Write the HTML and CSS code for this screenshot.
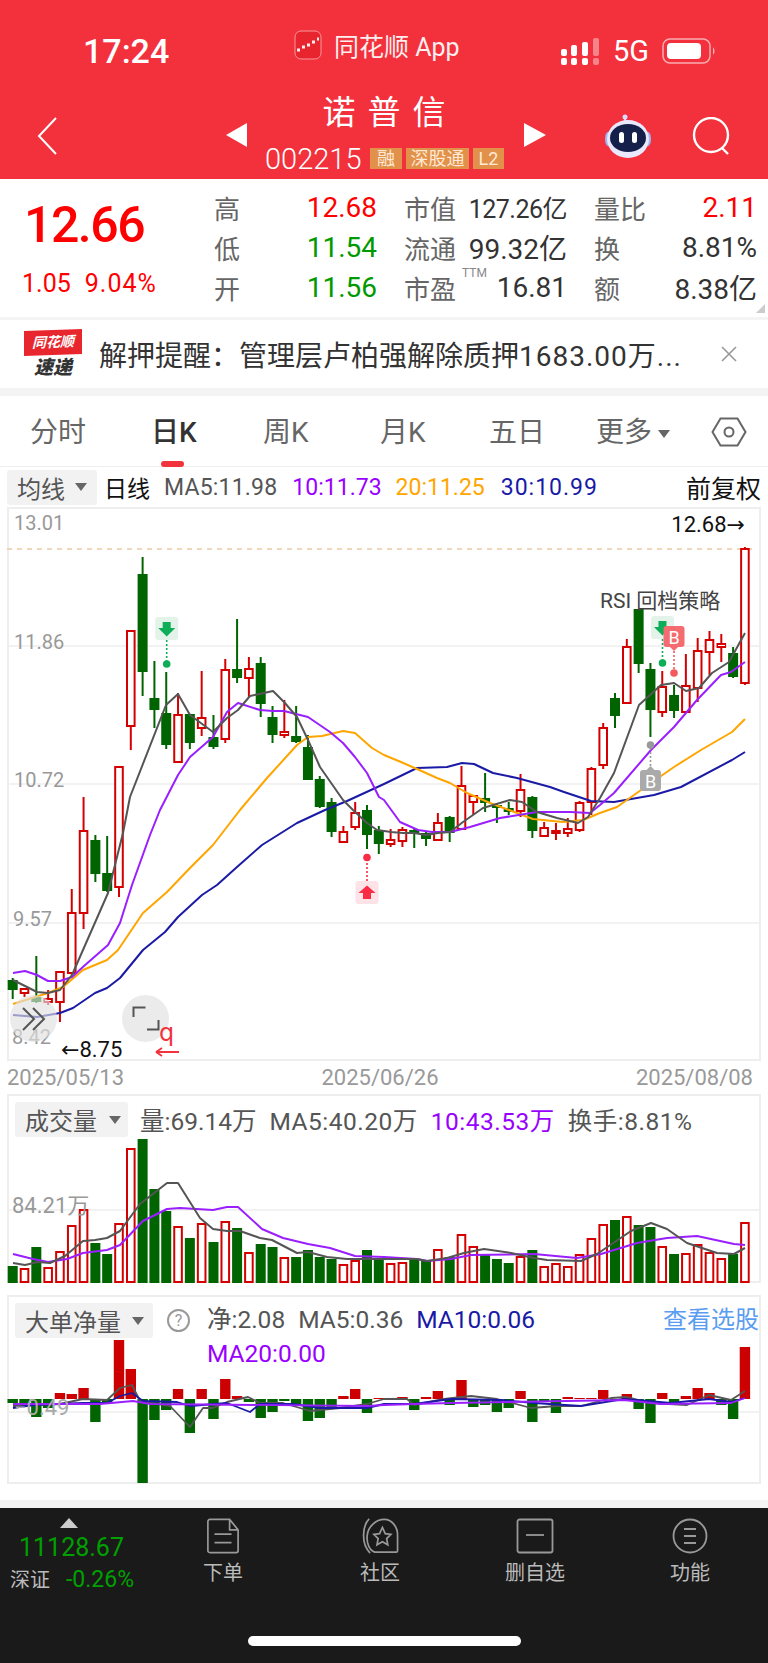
FILE: index.html
```html
<!DOCTYPE html>
<html lang="zh-CN">
<head>
    <meta charset="UTF-8">
    <meta name="viewport" content="width=device-width, initial-scale=1.0">
    <title>诺普信 002215</title>
    <link rel="stylesheet" href="styles.css">
</head>
<body>
    <div id="app">
        <header class="top">
            <div class="status">
                <div class="time">17:24</div>
                <div class="carrier">
                    <svg class="app-logo" viewBox="0 0 28 30">
                        <rect x="1" y="1" width="26" height="28" rx="6" fill="#e8252d" stroke="#f9a0a3"/>
                        <path d="M3 20h3M8 17h3M13 15h3M18 12h3M23 9h2" stroke="#fff" stroke-width="3"/>
                    </svg>
                    <span>同花顺 App</span>
                </div>
                <div class="status-right">
                    <svg class="signal" viewBox="0 0 38 27">
                        <g fill="#fff">
                            <rect x="0" y="11" width="6" height="7" rx="2"/><rect x="0" y="20" width="6" height="7" rx="2"/>
                            <rect x="10" y="7" width="6" height="11" rx="2"/><rect x="10" y="20" width="6" height="7" rx="2"/>
                            <rect x="21" y="4" width="6" height="14" rx="2"/><rect x="21" y="20" width="6" height="7" rx="2"/>
                        </g>
                        <g fill="#fff" opacity=".4">
                            <rect x="32" y="0" width="6" height="18" rx="2"/><rect x="32" y="20" width="6" height="7" rx="2"/>
                        </g>
                    </svg>
                    <span class="net">5G</span>
                    <svg class="battery" viewBox="0 0 54 26">
                        <rect x="1" y="1" width="47" height="24" rx="7" fill="none" stroke="#fff" stroke-opacity=".6" stroke-width="1.5"/>
                        <rect x="5" y="5" width="34" height="16" rx="4" fill="#fff"/>
                        <path d="M51 9.500c2 1 2 6 0 7z" fill="#fff" opacity=".6"/>
                    </svg>
                </div>
            </div>
            <div class="nav">
                <svg class="back" viewBox="0 0 20 38"><path d="M19 1 2 19l17 18" fill="none" stroke="#fff" stroke-width="2"/></svg>
                <div class="arrow-left"></div>
                <div class="title">
                    <div class="name">诺普信</div>
                    <div class="code-row">
                        <span class="code">002215</span>
                        <span class="tag tag-rong">融</span>
                        <span class="tag tag-sgt">深股通</span>
                        <span class="tag tag-l2">L2</span>
                    </div>
                </div>
                <div class="arrow-right"></div>
                <svg class="robot" viewBox="0 0 48 44">
                    <path d="M22 8c-2-3-1-6 1-6" fill="none" stroke="#dcd8ff" stroke-width="2"/>
                    <circle cx="21" cy="3" r="2.500" fill="#dcd8ff"/>
                    <ellipse cx="4" cy="25" rx="3" ry="7" fill="#9fb4f5"/>
                    <ellipse cx="44" cy="25" rx="3" ry="7" fill="#9fb4f5"/>
                    <ellipse cx="24" cy="25" rx="21" ry="19" fill="#e9e8fd"/>
                    <ellipse cx="24" cy="24" rx="18" ry="14" fill="#14204a"/>
                    <rect x="15" y="18" width="5" height="11" rx="2.500" fill="#fff"/>
                    <rect x="28" y="18" width="5" height="11" rx="2.500" fill="#fff"/>
                </svg>
                <svg class="search" viewBox="0 0 40 38">
                    <circle cx="19" cy="18" r="17" fill="none" stroke="#fff" stroke-width="2.400"/>
                    <path d="m30 31 6 6" stroke="#fff" stroke-width="2.400"/>
                </svg>
            </div>
        </header>

        <section class="quote">
            <div class="price-block">
                <div class="price">12.66</div>
                <div class="change"><span>1.05</span><span class="pct">9.04%</span></div>
            </div>
            <div class="stats">
                <div class="stat"><span class="lbl">高</span><span class="val up">12.68</span></div>
                <div class="stat"><span class="lbl">市值</span><span class="val small">127.26亿</span></div>
                <div class="stat"><span class="lbl">量比</span><span class="val up">2.11</span></div>
                <div class="stat"><span class="lbl">低</span><span class="val down">11.54</span></div>
                <div class="stat"><span class="lbl">流通</span><span class="val">99.32亿</span></div>
                <div class="stat"><span class="lbl">换</span><span class="val">8.81%</span></div>
                <div class="stat"><span class="lbl">开</span><span class="val down">11.56</span></div>
                <div class="stat"><span class="lbl">市盈<sup class="ttm">TTM</sup></span><span class="val">16.81</span></div>
                <div class="stat"><span class="lbl">额</span><span class="val">8.38亿</span></div>
            </div>
            <div class="corner"></div>
        </section>

        <section class="news">
            <div class="news-logo">
                <div class="news-badge">同花顺</div>
                <div class="news-sub">速递</div>
            </div>
            <div class="news-text">解押提醒：管理层卢柏强解除质押<span class="news-tail">1683.00万...</span></div>
            <svg class="news-close" viewBox="0 0 16 16"><path d="m1 1 14 14M15 1 1 15" stroke="#999" stroke-width="1.600"/></svg>
        </section>

        <nav class="tabs">
            <span class="tab tab-fs">分时</span>
            <span class="tab tab-day active">日K</span>
            <span class="tab tab-week">周K</span>
            <span class="tab tab-month">月K</span>
            <span class="tab tab-five">五日</span>
            <span class="tab tab-more">更多<i class="caret"></i></span>
            <svg class="hex" viewBox="0 0 36 30">
                <path d="M9.500 1.500h17L34.500 15l-8 13.500h-17L1.500 15z" fill="none" stroke="#666" stroke-width="2"/>
                <circle cx="18" cy="15" r="4.500" fill="none" stroke="#666" stroke-width="2"/>
            </svg>
        </nav>

        <div class="legend legend-main">
            <div class="picker"><span>均线</span><i class="caret"></i></div>
            <span class="black">日线</span>
            <span class="ma5">MA5:11.98</span>
            <span class="ma10">10:11.73</span>
            <span class="ma20">20:11.25</span>
            <span class="ma30">30:10.99</span>
            <span class="adjust">前复权</span>
        </div>

        <div class="chart chart-main" id="chart-main">
            <span class="axis" id="ax-1301">13.01</span>
            <span class="axis" id="ax-1186">11.86</span>
            <span class="axis" id="ax-1072">10.72</span>
            <span class="axis" id="ax-957">9.57</span>
            <span class="axis" id="ax-842">8.42</span>
            <span class="peak" id="mark-high">12.68→</span>
            <span class="peak" id="mark-low">←8.75</span>
            <span class="strategy">RSI 回档策略</span>
            <div class="float-btn btn-expand">
                <svg viewBox="0 0 30 30"><path d="M4 4 15 15 4 26M14 4 25 15 14 26" fill="none" stroke="#555" stroke-width="2"/></svg>
            </div>
            <div class="float-btn btn-corners">
                <svg viewBox="0 0 30 30"><path d="M2.500 13V3.500h12M27.500 16v9.500H16" fill="none" stroke="#555" stroke-width="2"/></svg>
            </div>
            <span class="stray-q">q</span>
            <svg class="stray-arrow" viewBox="0 0 24 12"><path d="M1 6h23M1 6l6-4M1 6l6 4" fill="none" stroke="#f2323c" stroke-width="1.800"/></svg>
        </div>

        <div class="dates">
            <span>2025/05/13</span>
            <span>2025/06/26</span>
            <span>2025/08/08</span>
        </div>

        <div class="chart chart-vol" id="chart-vol">
            <div class="legend legend-sub">
                <div class="picker picker-vol"><span>成交量</span><i class="caret"></i></div>
                <span class="gray">量:69.14万</span>
                <span class="gray wide">MA5:40.20万</span>
                <span class="ma10 wide">10:43.53万</span>
                <span class="gray wide">换手:8.81%</span>
            </div>
            <span class="axis" id="ax-vol">84.21万</span>
        </div>

        <div class="chart chart-net" id="chart-net">
            <div class="legend legend-net">
                <div class="picker picker-net"><span>大单净量</span><i class="caret"></i></div>
                <span class="help">?</span>
                <div class="net-values">
                    <span class="gray">净:2.08</span>
                    <span class="gray">MA5:0.36</span>
                    <span class="ma30">MA10:0.06</span>
                    <span class="ma10 net-wrap">MA20:0.00</span>
                </div>
                <span class="pick-link">查看选股</span>
            </div>
            <span class="axis" id="ax-net">−0.49</span>
        </div>

        <div class="white-gap"></div>
        <footer class="bottom">
            <div class="index">
                <div class="index-up"></div>
                <div class="index-val">11128.67</div>
                <div class="index-row"><span class="index-name">深证</span><span class="index-pct">-0.26%</span></div>
            </div>
            <div class="action action-order">
                <svg viewBox="0 0 36 38"><path d="M2 3.500a2 2 0 0 1 2-2h21l9 11v22a2 2 0 0 1-2 2H4a2 2 0 0 1-2-2zM25 1.500v11h9M9 17h18M9 26h18" fill="none" stroke="#999" stroke-width="1.800"/></svg>
                <span>下单</span>
            </div>
            <div class="action action-social">
                <svg viewBox="0 0 40 38"><path d="M8 1C1 8-1 27 9 37" fill="none" stroke="#999" stroke-width="1.800"/><path d="M24 1.500c8 0 14 8 14 16v17a1.500 1.500 0 0 1-1.500 1.500H14C8 34 5 26 6 18 7 9 15 1.500 24 1.500z" fill="none" stroke="#999" stroke-width="1.800"/><path d="m22 10 3 6.500 6 .8-4.500 4.500 1.200 6.500-5.700-3.300-5.700 3.300 1.200-6.500-4.500-4.500 6-.8z" fill="none" stroke="#999" stroke-width="1.800"/></svg>
                <span>社区</span>
            </div>
            <div class="action action-del">
                <svg viewBox="0 0 38 36"><rect x="1.500" y="1.500" width="35" height="33" rx="2" fill="none" stroke="#999" stroke-width="1.800"/><path d="M10 17h18" stroke="#999" stroke-width="1.800"/></svg>
                <span>删自选</span>
            </div>
            <div class="action action-more">
                <svg viewBox="0 0 36 36"><circle cx="18" cy="18" r="16.500" fill="none" stroke="#999" stroke-width="1.800"/><path d="M12 11h12M12 18h12M12 25h12" stroke="#999" stroke-width="2"/></svg>
                <span>功能</span>
            </div>
            <div class="home-bar"></div>
        </footer>
    </div>

    <script src="chart.js"></script>
</body>
</html>
```

FILE: styles.css
```css
* {
    box-sizing: border-box;
}

body {
    font-family: Roboto, "Noto Sans CJK SC", sans-serif;
    margin: 0;
    padding: 0;
    background-color: #fff;
}

#app {
    width: 768px;
    height: 1663px;
    overflow: hidden;
    position: relative;
}

.caret {
    display: inline-block;
    width: 0;
    height: 0;
    border-left: 6px solid transparent;
    border-right: 6px solid transparent;
    border-top: 8px solid #666;
}

/* red header */
.top {
    height: 179px;
    background-color: #f2313c;
    color: #fff;
}

.status {
    height: 92px;
    padding-top: 10px;
    display: flex;
    align-items: center;
    position: relative;
}

.time {
    margin-left: 83px;
    font-size: 34px;
    font-weight: 500;
}

.carrier {
    position: absolute;
    left: 294px;
    top: 27px;
    display: flex;
    align-items: center;
    gap: 12px;
    font-size: 25px;
    color: #fff;
    opacity: .92;
}

.app-logo {
    width: 28px;
    height: 30px;
}

.status-right {
    margin-left: auto;
    margin-right: 52px;
    display: flex;
    align-items: center;
}

.signal {
    width: 38px;
    height: 27px;
    margin-right: 14px;
}

.net {
    font-size: 29px;
    width: 49px;
}

.battery {
    width: 54px;
    height: 26px;
}

.nav {
    height: 87px;
    display: flex;
    align-items: center;
    position: relative;
}

.back {
    width: 20px;
    height: 38px;
    margin-left: 37px;
}

.arrow-left, .arrow-right {
    width: 0;
    height: 0;
    margin-bottom: 2px;
    border-top: 12px solid transparent;
    border-bottom: 12px solid transparent;
}

.arrow-left {
    margin-left: 169px;
    border-right: 21px solid #fff;
}

.arrow-right {
    border-left: 22px solid #fff;
}

.title {
    width: 277px;
    text-align: center;
    align-self: flex-start;
}

.name {
    font-size: 33px;
    letter-spacing: 12px;
    padding-left: 9px;
    line-height: 40px;
    margin-top: 1px;
    font-weight: 400;
}

.code-row {
    display: flex;
    align-items: center;
    height: 21px;
    margin: 15px 0 0 18px;
}

.code {
    font-size: 29px;
    font-weight: 300;
    width: 105px;
    text-align: left;
}

.tag {
    height: 21px;
    line-height: 21px;
    background-color: #e2914a;
    font-size: 18px;
    text-align: center;
    color: #ffe9d6;
}

.tag-rong {
    width: 32px;
    margin-right: 4px;
}

.tag-sgt {
    width: 63px;
    margin-right: 4px;
}

.tag-l2 {
    width: 31px;
}

.robot {
    width: 48px;
    height: 44px;
    margin-left: 58px;
}

.search {
    width: 40px;
    height: 38px;
    margin-left: 40px;
}

/* price panel */
.quote {
    height: 141px;
    display: flex;
    position: relative;
    border-bottom: 3px solid #f4f4f4;
}

.price-block {
    width: 214px;
    padding-left: 24px;
    color: #f00;
}

.price {
    font-size: 50px;
    font-weight: 500;
    line-height: 58px;
    margin-top: 17px;
    letter-spacing: -1.500px;
}

.change {
    display: flex;
    gap: 14px;
    font-size: 25px;
    line-height: 28px;
    margin-top: 16px;
    margin-left: -2px;
}

.pct {
    letter-spacing: 1px;
}

.stats {
    width: 543px;
    display: grid;
    grid-template-columns: 163px 163px 163px;
    column-gap: 27px;
    grid-auto-rows: 40px;
    padding-top: 8px;
}

.stat {
    display: flex;
    justify-content: space-between;
    align-items: center;
}

.lbl {
    font-size: 26px;
    color: #666;
    position: relative;
}

.ttm {
    position: absolute;
    left: 58px;
    top: -3px;
    font-size: 12px;
    line-height: 14px;
    color: #888;
}

.val {
    font-size: 28px;
    color: #333;
}

.val.small {
    font-size: 25px;
    letter-spacing: -.5px;
}

.up {
    color: #f00;
}

.down {
    color: #090;
}

.corner {
    position: absolute;
    right: 3px;
    bottom: 4px;
    width: 0;
    height: 0;
    border-left: 9px solid transparent;
    border-bottom: 9px solid #ccc;
}

/* news strip */
.news {
    height: 76px;
    display: flex;
    align-items: center;
    border-bottom: 8px solid #f4f4f4;
    padding-left: 24px;
}

.news-logo {
    width: 58px;
}

.news-badge {
    background-color: #e8262e;
    color: #fff;
    font-size: 14px;
    font-weight: 700;
    font-style: italic;
    line-height: 25px;
    height: 25px;
    text-align: center;
    transform: skewY(-2deg);
}

.news-sub {
    font-size: 19px;
    font-weight: 900;
    font-style: italic;
    color: #333;
    line-height: 22px;
    text-align: center;
    margin-top: 2px;
}

.news-text {
    font-size: 28px;
    color: #333;
    margin-left: 17px;
    white-space: nowrap;
    width: 622px;
}

.news-tail {
    letter-spacing: 1px;
}

.news-close {
    width: 16px;
    height: 16px;
}

/* period tabs */
.tabs {
    height: 71px;
    position: relative;
    border-bottom: 1px solid #eee;
}

.tab {
    position: absolute;
    top: 18px;
    font-size: 28px;
    line-height: 38px;
    color: #666;
}

.tab-fs { left: 30px; }
.tab-week { left: 263px; }
.tab-month { left: 380px; }
.tab-five { left: 489px; }
.tab-more { left: 596px; }

.tab-day {
    left: 151px;
}

.tab.active {
    color: #333;
    font-weight: 500;
}

.tab.active::after {
    content: "";
    position: absolute;
    left: 10px;
    top: 47px;
    width: 23px;
    height: 6px;
    border-radius: 3px;
    background-color: #f2323c;
}

.tab-more .caret {
    margin-left: 6px;
    vertical-align: 4px;
}

.hex {
    position: absolute;
    left: 711px;
    top: 21px;
    width: 36px;
    height: 30px;
}

/* indicator legends */
.legend {
    display: flex;
    align-items: center;
    font-size: 24.500px;
    white-space: nowrap;
}

.legend-main {
    height: 40px;
    padding-left: 7px;
    font-size: 23px;
}

.picker {
    display: flex;
    align-items: center;
    gap: 10px;
    height: 35px;
    padding-left: 10px;
    background-color: #f2f2f2;
    border-radius: 3px;
    color: #555;
    font-size: 24px;
    width: 90px;
    flex: none;
}

.black {
    color: #111;
    margin-left: 7px;
    margin-right: 14px;
}

.gray, .ma5 {
    color: #555;
}

.ma10 {
    color: #90f;
}

.ma20 {
    color: #ffa500;
}

.ma30 {
    color: #1a1aa6;
}

.legend-main .ma5 {
    letter-spacing: .2px;
}

.legend-main .ma10 {
    margin-left: 15px;
}

.legend-main .ma20 {
    margin-left: 14px;
}

.legend-main .ma30 {
    margin-left: 16px;
    letter-spacing: 1px;
}

.adjust {
    margin-left: auto;
    margin-right: 7px;
    color: #111;
    font-size: 25px;
}

/* chart boxes */
.chart {
    position: relative;
    margin: 0 7px;
    width: 754px;
    border: 2px solid #eee;
}

.chart svg.plot {
    position: absolute;
    left: -2px;
    top: -2px;
    width: 754px;
}

.chart-main {
    height: 554px;
}

.chart-vol {
    height: 189px;
    margin-bottom: 12px;
}

.chart-net {
    height: 189px;
}

.axis {
    position: absolute;
    font-size: 20px;
    line-height: 24px;
    color: #999;
    white-space: nowrap;
    z-index: 1;
}

#ax-1301 { left: 5px; top: 2px; }
#ax-1186 { left: 5px; top: 121px; }
#ax-1072 { left: 5px; top: 259px; }
#ax-957 { left: 4px; top: 398px; }
#ax-842 { left: 3px; top: 516px; }
#ax-vol { left: 3px; top: 98px; font-size: 22px; }
#ax-net { left: 5px; top: 99px; font-size: 22px; color: #aaa; }

.peak {
    position: absolute;
    font-size: 22px;
    line-height: 24px;
    color: #111;
    font-family: Roboto, "DejaVu Sans", sans-serif;
    white-space: nowrap;
}

#mark-high { right: 14px; top: 4px; }
#mark-low { left: 52px; top: 529px; }

.strategy {
    position: absolute;
    left: 591px;
    top: 79px;
    font-size: 21px;
    line-height: 26px;
    color: #444;
    white-space: nowrap;
}

.float-btn {
    position: absolute;
    width: 47px;
    height: 47px;
    border-radius: 50%;
    background-color: rgba(225, 225, 225, .65);
    display: flex;
    align-items: center;
    justify-content: center;
    z-index: 2;
}

.float-btn svg {
    width: 30px;
    height: 30px;
}

.btn-expand {
    left: 1px;
    top: 486px;
}

.btn-corners {
    left: 113px;
    top: 486px;
}

.stray-q {
    position: absolute;
    left: 150px;
    top: 514px;
    color: #f2323c;
    font-family: "DejaVu Sans", sans-serif;
    font-size: 24px;
    line-height: 20px;
    z-index: 3;
}

.stray-arrow {
    position: absolute;
    left: 146px;
    top: 537px;
    width: 24px;
    height: 12px;
    z-index: 3;
}

.dates {
    height: 33px;
    margin: 0 15px 0 7px;
    display: flex;
    justify-content: space-between;
    align-items: center;
    font-size: 22px;
    color: #999;
}

.legend-sub {
    position: absolute;
    left: 6px;
    top: 6px;
    gap: 13px;
    z-index: 1;
}

.wide {
    letter-spacing: .5px;
}

.picker-vol {
    width: 113px;
    margin-right: -1px;
}

.picker-net {
    width: 138px;
    gap: 9px;
}

.picker-net .caret, .picker-vol .caret {
    margin-left: 2px;
}

.legend-net {
    position: absolute;
    left: 6px;
    top: 6px;
    right: 0;
    align-items: flex-start;
    z-index: 1;
}

.help {
    width: 23px;
    height: 23px;
    border: 2px solid #999;
    border-radius: 50%;
    color: #999;
    font-size: 16px;
    line-height: 19px;
    text-align: center;
    margin: 6px 0 0 14px;
}

.net-values {
    display: flex;
    flex-wrap: wrap;
    gap: 0 13px;
    width: 340px;
    margin-left: 17px;
    line-height: 34px;
}

.net-wrap {
    width: 100%;
}

.pick-link {
    margin-left: 117px;
    font-size: 24px;
    line-height: 35px;
    color: #5a9df0;
}

/* bottom bar */
.white-gap {
    height: 16px;
}

.bottom {
    height: 163px;
    background-color: #1a1a1a;
    border-top: 8px solid #f4f4f4;
    position: relative;
    display: flex;
    color: #bbb;
}

.index {
    width: 170px;
    position: relative;
}

.index-up {
    position: absolute;
    left: 60px;
    top: 10px;
    width: 0;
    height: 0;
    border-left: 9px solid transparent;
    border-right: 9px solid transparent;
    border-bottom: 10px solid #ccc;
}

.index-val {
    position: absolute;
    left: 19px;
    top: 25px;
    font-size: 25px;
    line-height: 30px;
    color: #00a000;
}

.index-row {
    position: absolute;
    left: 10px;
    top: 59px;
    display: flex;
    align-items: center;
    gap: 16px;
    line-height: 26px;
}

.index-name {
    font-size: 20px;
}

.index-pct {
    font-size: 23px;
    color: #00a000;
}

.action {
    position: absolute;
    top: 10px;
    display: flex;
    flex-direction: column;
    align-items: center;
    font-size: 20px;
    line-height: 26px;
    gap: 6px;
}

.action svg {
    height: 36px;
}

.action-order { left: 203px; width: 40px; }
.action-social { left: 360px; width: 40px; }
.action-del { left: 505px; width: 60px; }
.action-more { left: 670px; width: 40px; }

.action-order svg { width: 34px; }
.action-social svg { width: 39px; }
.action-del svg { width: 38px; }
.action-more svg { width: 36px; }

.home-bar {
    position: absolute;
    left: 248px;
    top: 128px;
    width: 273px;
    height: 10px;
    border-radius: 5px;
    background-color: #fff;
}
```

FILE: chart.js
```js
// all y values below are page coordinates, each svg viewBox starts at its box top
const RED = '#d40000';
const GREEN = '#006400';
const COLORS = { ma5: '#555', ma10: '#9a1fff', ma20: '#ffa500', ma30: '#1a1aa6' };
const firstX = 12.7;
const stepX = 11.81;

// [up?, bodyTop, bodyBottom, wickTop, wickBottom]
const candles = [
    [0,980,990,978,999],[1,989,993,988,997],[0,997,1002,956,1003],[1,999,1002,990,1005],
    [1,972,1002,972,1022],[1,913,973,889,975],[1,831,913,797,929],[0,840,874,835,882],
    [0,873,891,836,892],[1,767,887,767,897],[1,631,726,631,750],[0,574,672,557,696],
    [0,698,710,661,728],[0,713,745,672,749],[1,715,762,693,762],[0,714,743,714,749],
    [1,718,728,671,736],[0,737,747,715,749],[1,670,739,659,743],[0,669,678,619,683],
    [1,669,678,657,697],[0,663,704,657,717],[0,717,735,706,743],[1,732,735,700,738],
    [0,736,742,706,743],[0,747,780,735,780],[0,779,807,776,808],[0,802,832,798,837],
    [1,832,842,826,842],[1,813,827,802,830],[0,810,835,805,849],[0,830,844,826,854],
    [1,840,844,829,847],[1,830,841,827,847],[0,830,834,828,848],[0,833,839,832,846],
    [1,823,840,813,840],[0,817,833,816,842],[1,786,829,766,829],[1,796,802,796,815],
    [0,798,803,773,812],[0,805,808,803,823],[0,808,812,802,815],[1,790,811,774,817],
    [0,797,831,796,838],[1,828,836,822,836],[1,831,833,823,840],[1,829,833,818,837],
    [1,803,830,801,832],[1,769,802,767,815],[1,728,765,723,769],[0,698,716,693,728],
    [1,647,703,639,703],[0,609,664,609,673],[0,669,710,663,737],[1,687,712,671,717],
    [0,695,711,685,718],[1,686,712,654,712],[1,651,688,638,702],[1,640,652,631,675],
    [1,644,647,634,662],[0,653,677,647,678],[1,549,683,547,685]
];

const volTops = [
    1265,1268,1246,1267,1251,1225,1209,1242,1253,1223,1148,1138,1188,1210,1226,1237,
    1223,1241,1221,1227,1252,1243,1246,1257,1256,1249,1256,1258,1264,1260,1249,1258,
    1263,1262,1258,1260,1249,1256,1234,1246,1253,1258,1262,1256,1249,1266,1263,1266,
    1254,1238,1224,1219,1216,1224,1226,1246,1253,1253,1244,1252,1258,1253,1222
];

const netEnds = [
    1402,1402,1416,1407,1392,1393,1387,1421,1402,1339,1368,1482,1419,1409,1388,1432,
    1388,1418,1378,1395,1401,1417,1411,1400,1403,1420,1417,1408,1395,1388,1412,1397,
    1397,1396,1409,1396,1390,1404,1379,1406,1404,1411,1407,1390,1421,1400,1412,1396,
    1397,1397,1389,1400,1393,1408,1422,1392,1402,1395,1387,1392,1404,1418,1346
];
const netBase = 1398;

const mainLines = {
    ma30: [13,1015,37,1017,60,1013,73,1008,95,993,107,988,120,978,143,950,165,932,178,917,202,895,217,885,237,867,262,845,297,823,325,810,347,801,384,784,417,768,447,767,462,763,474,764,493,773,517,778,550,787,564,792,591,801,614,802,654,795,681,787,732,760,745,752],
    ma20: [13,1004,48,993,63,987,83,970,107,960,118,950,143,913,167,892,190,868,213,845,240,810,267,778,297,745,308,737,322,736,343,731,355,733,372,748,384,755,401,762,417,769,437,778,450,783,467,793,490,803,517,813,533,819,563,822,583,820,600,813,617,807,651,783,674,767,701,750,732,732,745,719],
    ma10: [13,973,25,971,37,975,48,981,60,981,72,977,84,966,108,945,120,923,132,885,150,835,160,810,178,775,190,757,213,737,227,712,238,703,260,710,273,711,284,711,308,717,330,732,343,743,355,757,367,773,379,797,384,800,400,822,418,830,432,832,450,832,470,827,500,818,537,812,570,812,590,813,600,805,614,793,651,750,674,727,697,700,721,675,731,672,745,662],
    ma5: [13,980,37,992,48,993,60,990,72,975,108,893,123,833,130,797,166,705,178,694,190,715,213,732,227,718,238,710,250,696,273,691,284,702,297,717,308,740,320,767,343,800,353,810,367,823,377,830,391,832,403,833,414,833,426,835,438,833,450,832,463,822,483,808,510,800,522,802,537,812,557,818,578,823,588,817,600,798,614,773,639,705,661,685,674,683,686,691,699,688,712,673,729,662,745,633]
};

const volLines = {
    ma10: [13,1253,33,1258,48,1261,67,1258,83,1252,107,1249,120,1244,143,1220,167,1208,180,1207,213,1209,227,1206,238,1206,262,1228,283,1237,308,1243,330,1247,355,1255,384,1256,417,1258,427,1260,451,1258,471,1254,534,1253,577,1257,601,1253,637,1242,667,1237,697,1235,734,1243,745,1244],
    ma5: [13,1262,25,1264,38,1261,50,1262,65,1255,83,1240,95,1239,107,1237,120,1230,140,1203,167,1182,178,1182,200,1217,213,1228,227,1230,240,1230,260,1237,272,1239,297,1252,308,1251,327,1256,347,1258,384,1258,417,1258,427,1260,447,1257,464,1252,484,1248,511,1252,534,1257,547,1259,581,1260,597,1253,631,1230,651,1222,667,1228,687,1242,717,1252,734,1253,745,1247]
};

const netLines = {
    ma5: [13,1405,60,1403,83,1398,107,1399,120,1387,132,1384,140,1400,170,1405,190,1426,203,1407,213,1407,227,1401,248,1396,260,1402,283,1402,310,1410,340,1407,367,1403,384,1398,407,1398,414,1404,444,1398,471,1395,497,1398,531,1407,557,1405,581,1405,611,1397,627,1396,651,1402,687,1404,709,1394,731,1399,745,1390],
    ma30: [13,1407,33,1404,83,1402,107,1402,120,1395,132,1392,143,1400,177,1401,190,1405,227,1402,250,1411,260,1403,293,1403,320,1407,367,1407,384,1403,414,1403,451,1398,501,1399,534,1402,581,1405,624,1398,671,1402,709,1398,731,1401,745,1397],
    ma10: [13,1403,100,1403,133,1400,150,1403,367,1405,384,1404,414,1403,451,1402,624,1399,661,1403,731,1402,745,1397]
};

function el(parent, tag, attrs, text) {
    const node = document.createElementNS('http://www.w3.org/2000/svg', tag);
    for (const key in attrs) {
        node.setAttribute(key, attrs[key]);
    }
    if (text) {
        node.textContent = text;
    }
    parent.appendChild(node);
    return node;
}

function makePlot(boxId, top, height) {
    const box = document.getElementById(boxId);
    const svg = el(box, 'svg', { class: 'plot', viewBox: `7 ${top} 754 ${height}`, height: height });
    box.insertBefore(svg, box.firstChild);
    return svg;
}

function gridLine(svg, y) {
    el(svg, 'line', { x1: 7, x2: 761, y1: y, y2: y, stroke: '#eee', 'stroke-width': 1.5 });
}

function drawLines(svg, lines, width) {
    for (const name in lines) {
        const pts = lines[name];
        let str = '';
        for (let i = 0; i < pts.length; i += 2) {
            str += pts[i] + ',' + pts[i + 1] + ' ';
        }
        el(svg, 'polyline', {
            points: str, fill: 'none', stroke: COLORS[name],
            'stroke-width': width, 'stroke-linejoin': 'round'
        });
    }
}

// small flag with a dotted stem down or up to a dot
function flag(svg, cx, boxTop, boxSize, dotY, color, bg) {
    const stemFrom = boxTop < dotY ? boxTop + boxSize : boxTop;
    el(svg, 'line', {
        x1: cx, x2: cx, y1: stemFrom, y2: dotY, stroke: color,
        'stroke-width': 1.6, 'stroke-dasharray': '2 2'
    });
    el(svg, 'circle', { cx: cx, cy: dotY, r: 3.8, fill: color });
    el(svg, 'rect', { x: cx - boxSize / 2, y: boxTop, width: boxSize, height: boxSize, rx: 3, fill: bg });
}

function arrowDown(svg, cx, y, color) {
    el(svg, 'path', { d: `M${cx - 4} ${y}h8v6h4.500l-8.500 8.500-8.500-8.500h4.500z`, fill: color });
}

function drawMain() {
    const svg = makePlot('chart-main', 507, 554);
    gridLine(svg, 646);
    gridLine(svg, 784);
    gridLine(svg, 923);
    el(svg, 'line', {
        x1: 7, x2: 757, y1: 549, y2: 549, stroke: '#ecc9a4',
        'stroke-width': 1.4, 'stroke-dasharray': '5 5'
    });

    candles.forEach((c, i) => {
        const x = firstX + stepX * i;
        const color = c[0] ? RED : GREEN;
        if (c[0]) {
            el(svg, 'line', { x1: x, x2: x, y1: c[3], y2: c[1], stroke: color, 'stroke-width': 2 });
            el(svg, 'line', { x1: x, x2: x, y1: c[2], y2: c[4], stroke: color, 'stroke-width': 2 });
            el(svg, 'rect', {
                x: x - 3.8, y: c[1], width: 7.6, height: c[2] - c[1],
                fill: '#fff', stroke: color, 'stroke-width': 2
            });
        } else {
            el(svg, 'line', { x1: x, x2: x, y1: c[3], y2: c[4], stroke: color, 'stroke-width': 2 });
            el(svg, 'rect', { x: x - 5, y: c[1], width: 10, height: c[2] - c[1], fill: color });
        }
    });

    drawLines(svg, { ma30: mainLines.ma30, ma20: mainLines.ma20, ma10: mainLines.ma10, ma5: mainLines.ma5 }, 2);

    // strategy markers
    flag(svg, 166.7, 617, 23, 664, '#0ead57', '#e3f3ea');
    arrowDown(svg, 166.7, 622, '#0ead57');
    flag(svg, 662.5, 616, 23, 663, '#0ead57', '#e3f3ea');
    arrowDown(svg, 662.5, 621, '#0ead57');

    flag(svg, 674, 626, 21, 673, '#f4595e', '#f46c70');
    el(svg, 'path', { d: 'M670 647h8l-4 4z', fill: '#f46c70' });
    el(svg, 'text', { x: 674, y: 644, 'text-anchor': 'middle', fill: '#fff', 'font-size': 18 }, 'B');
    flag(svg, 650.5, 770, 21, 745, '#999', '#aaa');
    el(svg, 'path', { d: 'M646.500 770h8l-4-4z', fill: '#aaa' });
    el(svg, 'text', { x: 650.5, y: 788, 'text-anchor': 'middle', fill: '#fff', 'font-size': 18 }, 'B');

    flag(svg, 367, 881, 23, 857.5, '#fa2b45', '#fde2e7');
    el(svg, 'path', { d: 'M363 899v-6h-4.500l8.500-7.500 8.500 7.500H371v6z', fill: '#fa2b45' });
}

function drawVolume() {
    const svg = makePlot('chart-vol', 1093, 189);
    gridLine(svg, 1209);
    volTops.forEach((top, i) => {
        const x = firstX + stepX * i;
        if (candles[i][0]) {
            el(svg, 'rect', {
                x: x - 3.8, y: top, width: 7.6, height: 1281 - top,
                fill: '#fff', stroke: RED, 'stroke-width': 2
            });
        } else {
            el(svg, 'rect', { x: x - 5, y: top, width: 10, height: 1282 - top, fill: GREEN });
        }
    });
    drawLines(svg, volLines, 2);
}

function drawNet() {
    const svg = makePlot('chart-net', 1294, 189);
    gridLine(svg, 1411);
    netEnds.forEach((end, i) => {
        const x = firstX + stepX * i;
        const y = Math.min(end, netBase);
        el(svg, 'rect', {
            x: x - 5.2, y: y, width: 10.4, height: Math.abs(end - netBase),
            fill: end < netBase ? '#cc0000' : GREEN
        });
    });
    drawLines(svg, netLines, 1.8);
}

drawMain();
drawVolume();
drawNet();
```
